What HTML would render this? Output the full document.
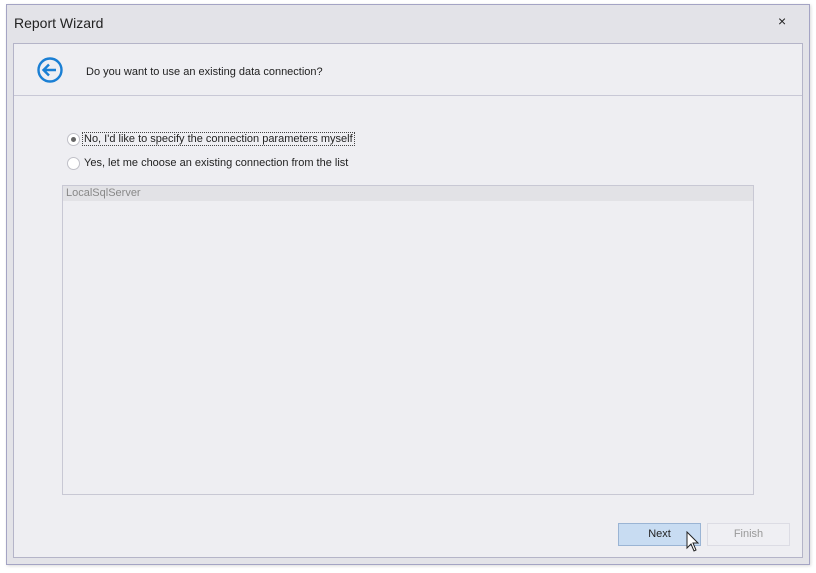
<!DOCTYPE html>
<html><head><style>
body{margin:0;width:816px;height:573px;background:#fff;position:relative;overflow:hidden;font-family:"Liberation Sans",sans-serif;}
.abs{position:absolute;}
#win{left:6px;top:4px;width:802px;height:559px;border:1px solid #a4a4c4;background:#e3e3e8;box-shadow:1px 1px 3px rgba(0,0,0,.15);}
#panel{left:13px;top:43px;width:788px;height:513px;border:1px solid #b4b4c8;background:#eeeef2;}
.t{font-size:11px;color:#222;white-space:nowrap;}
.radio{width:11px;height:11px;border:1px solid #c0c0c8;border-radius:50%;background:#fff;}
</style></head><body>
<div id="win" class="abs"></div>
<div class="abs" style="left:14px;top:15px;font-size:14px;color:#222;">Report Wizard</div>
<div class="abs" style="left:778px;top:13px;font-size:14px;color:#222;">×</div>
<div id="panel" class="abs"></div>
<div class="abs" style="left:14px;top:95px;width:788px;height:1px;background:#c8c8d6;"></div>
<svg class="abs" style="left:36px;top:56px" width="28" height="28" viewBox="0 0 28 28"><circle cx="14" cy="14" r="11.5" fill="none" stroke="#1a7fd4" stroke-width="2.4"/><path d="M20 14H8M13 8.5L7.5 14L13 19.5" fill="none" stroke="#1a7fd4" stroke-width="2.4"/></svg>
<div class="abs t" style="left:86px;top:66px;">Do you want to use an existing data connection?</div>
<div class="abs radio" style="left:67px;top:133px;"><div style="width:5px;height:5px;border-radius:50%;background:#666;margin:3px;"></div></div>
<div class="abs t" style="left:82px;top:132px;border:1px dotted #444;padding:0 1px;">No, I'd like to specify the connection parameters myself</div>
<div class="abs radio" style="left:67px;top:157px;"></div>
<div class="abs t" style="left:84px;top:157px;">Yes, let me choose an existing connection from the list</div>
<div class="abs" style="left:62px;top:185px;width:690px;height:308px;border:1px solid #c8c8d4;background:#eeeef2;"></div>
<div class="abs" style="left:63px;top:186px;width:690px;height:15px;background:#e2e2e6;"></div>
<div class="abs t" style="left:66px;top:187px;color:#888;">LocalSqlServer</div>
<div class="abs" style="left:618px;top:523px;width:81px;height:21px;border:1px solid #9ab4d4;background:#c8dcf2;"></div>
<div class="abs t" style="left:618px;top:528px;width:83px;text-align:center;">Next</div>
<div class="abs" style="left:707px;top:523px;width:81px;height:21px;border:1px solid #dcdce4;background:#efeff3;"></div>
<div class="abs t" style="left:707px;top:528px;width:83px;text-align:center;color:#999;">Finish</div>
<svg class="abs" style="left:686px;top:531px" width="14" height="22" viewBox="0 0 14 22"><path d="M1 1V17L5 13L8 20L10 19L7 12H12Z" fill="#fff" stroke="#222" stroke-width="1"/></svg>
</body></html>
